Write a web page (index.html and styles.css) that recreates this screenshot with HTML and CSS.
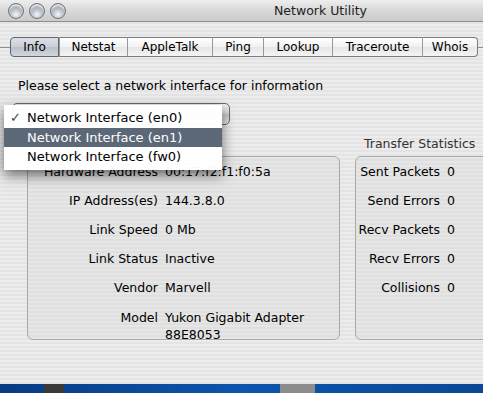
FILE: index.html
```html
<!DOCTYPE html>
<html lang="en">
<head>
    <meta charset="UTF-8">
    <meta name="viewport" content="width=device-width, initial-scale=1.0">
    <title>Network Utility</title>
    <link rel="stylesheet" href="styles.css">
</head>
<body>
    <div class="window">
        <div class="titlebar">
            <div class="lights">
                <span class="light"></span>
                <span class="light"></span>
                <span class="light"></span>
            </div>
            <div class="title">Network Utility</div>
        </div>

        <div class="tabs">
            <div class="tab-line"></div>
            <div class="tab selected" style="width:49px">Info</div>
            <div class="tab" style="width:68px">Netstat</div>
            <div class="tab" style="width:85px">AppleTalk</div>
            <div class="tab" style="width:51px">Ping</div>
            <div class="tab" style="width:69px">Lookup</div>
            <div class="tab" style="width:90px">Traceroute</div>
            <div class="tab last" style="width:56px">Whois</div>
            <div class="tab-line"></div>
        </div>

        <div class="prompt">Please select a network interface for information</div>

        <div class="popup-row">
            <div class="popup-button"></div>
            <div class="menu">
                <div class="menu-item"><span class="check">&#10003;</span>Network Interface (en0)</div>
                <div class="menu-item active">Network Interface (en1)</div>
                <div class="menu-item">Network Interface (fw0)</div>
            </div>
        </div>

        <div class="groups">
            <div class="group info">
                <!-- title sits under the open menu -->
                <div class="group-title"></div>
                <div class="box">
                    <div class="row"><span class="label">Hardware Address</span><span class="value">00:17:f2:f1:f0:5a</span></div>
                    <div class="row"><span class="label">IP Address(es)</span><span class="value">144.3.8.0</span></div>
                    <div class="row"><span class="label">Link Speed</span><span class="value">0 Mb</span></div>
                    <div class="row"><span class="label">Link Status</span><span class="value">Inactive</span></div>
                    <div class="row"><span class="label">Vendor</span><span class="value">Marvell</span></div>
                    <div class="row tall"><span class="label">Model</span><span class="value">Yukon Gigabit Adapter<br>88E8053</span></div>
                </div>
            </div>
            <div class="group stats">
                <div class="group-title">Transfer Statistics</div>
                <div class="box">
                    <div class="row"><span class="label">Sent Packets</span><span class="value">0</span></div>
                    <div class="row"><span class="label">Send Errors</span><span class="value">0</span></div>
                    <div class="row"><span class="label">Recv Packets</span><span class="value">0</span></div>
                    <div class="row"><span class="label">Recv Errors</span><span class="value">0</span></div>
                    <div class="row"><span class="label">Collisions</span><span class="value">0</span></div>
                </div>
            </div>
        </div>
    </div>
    <div class="desktop">
        <span class="dock-icon one"></span>
        <span class="dock-icon two"></span>
    </div>
</body>
</html>
```

FILE: styles.css
```css
body {
    margin: 0;
    width: 483px;
    height: 393px;
    overflow: hidden;
    font-family: "DejaVu Sans", "Liberation Sans", sans-serif;
    font-size: 12.5px;
    color: #000;
    background-color: #0b4c9c;
}
.window {
    height: 384px;
    width: 483px;
    background: repeating-linear-gradient(#ececec 0px, #ececec 2px, #e4e4e4 2px, #e4e4e4 4px);
    overflow: hidden;
}
.titlebar {
    height: 21px;
    display: flex;
    align-items: center;
    border-bottom: 1px solid #8e8e8e;
    background: linear-gradient(#eeeeee, #d8d8d8 50%, #cbcbcb);
}
.lights {
    display: flex;
    gap: 5px;
    padding-left: 8px;
}
.light {
    width: 14px;
    height: 14px;
    border-radius: 50%;
    border: 1px solid #6f7378;
    background: radial-gradient(circle at 50% 75%, #f4f6f8 0%, #b5bcc4 45%, #7d858e 100%);
    box-shadow: inset 0 2px 2px rgba(255, 255, 255, 0.8);
}
.title {
    margin-left: 208px;
    font-size: 12.5px;
    color: #222;
}
.tabs {
    display: flex;
    align-items: center;
    margin-top: 15px;
    height: 20px;
    font-size: 12px;
}
.tab-line {
    flex: 1;
    height: 1px;
    background-color: #8c8c8c;
    min-width: 5px;
}
.tabs .tab-line:first-child {
    flex: 0 0 10px;
}
.tab {
    height: 20px;
    line-height: 18px;
    text-align: center;
    box-sizing: border-box;
    border-top: 1px solid #7c7c7c;
    border-bottom: 1px solid #7c7c7c;
    border-left: 1px solid #9a9a9a;
    background: linear-gradient(#ffffff, #f1f1f1 50%, #e6e6e6 51%, #f4f4f4);
}
.tab.last {
    border-right: 1px solid #7c7c7c;
    border-radius: 0 4px 4px 0;
}
.tab.selected {
    border: 1px solid #5d6570;
    border-radius: 4px 0 0 4px;
    background: linear-gradient(#dde1e6, #c9ced5 50%, #b9c0c9 51%, #d2d7dd);
}
.prompt {
    margin: 21px 0 0 18px;
    line-height: 16px;
}
.popup-row {
    position: relative;
    height: 50px;
    margin-top: 8px;
}
.popup-button {
    margin: 9px 0 0 12px;
    width: 216px;
    height: 20px;
    border: 1px solid #6b6b6b;
    border-radius: 5px;
    background: linear-gradient(#f2f2f2, #d6d6d6 50%, #c6c6c6 51%, #e8e8e8);
}
.menu {
    position: absolute;
    left: 4px;
    top: 2px;
    width: 218px;
    padding: 3px 0 3px 0;
    background-color: rgba(255, 255, 255, 0.97);
    box-shadow: 0 5px 12px rgba(0, 0, 0, 0.55);
    font-size: 13px;
}
.menu-item {
    position: relative;
    height: 19.5px;
    line-height: 19px;
    padding-left: 23px;
}
.menu-item.active {
    background-color: #5c6777;
    color: #fff;
}
.check {
    position: absolute;
    left: 6px;
    color: #444;
    font-weight: bold;
}
.groups {
    display: flex;
    gap: 15px;
    margin-top: -17px;
    padding-left: 27px;
}
.group-title {
    color: #333;
    padding-left: 9px;
    height: 20px;
    line-height: 16px;
}
.box {
    box-sizing: border-box;
    height: 184px;
    border: 1px solid #a9a9a9;
    border-radius: 6px;
    background: repeating-linear-gradient(#e6e6e6 0px, #e6e6e6 2px, #dfdfdf 2px, #dfdfdf 4px);
    padding-top: 7px;
}
.info .box {
    width: 313px;
}
.stats .box {
    width: 140px;
}
.row {
    display: flex;
    height: 29px;
    line-height: 16px;
}
.row.tall {
    height: 34px;
    line-height: 17px;
}
.label {
    text-align: right;
    flex: 0 0 auto;
    padding-right: 7px;
    white-space: nowrap;
}
.info .label {
    width: 130px;
}
.stats .label {
    width: 84px;
}
.value {
    white-space: nowrap;
}
.desktop {
    height: 9px;
    position: relative;
    background: linear-gradient(90deg, #073b82, #0d55ad 50%, #0a4896);
}
.dock-icon {
    position: absolute;
    top: 0;
    height: 9px;
}
.dock-icon.one {
    left: 44px;
    width: 20px;
    background-color: #3a3a3a;
}
.dock-icon.two {
    left: 280px;
    width: 35px;
    background-color: #8c8c8c;
}
```
